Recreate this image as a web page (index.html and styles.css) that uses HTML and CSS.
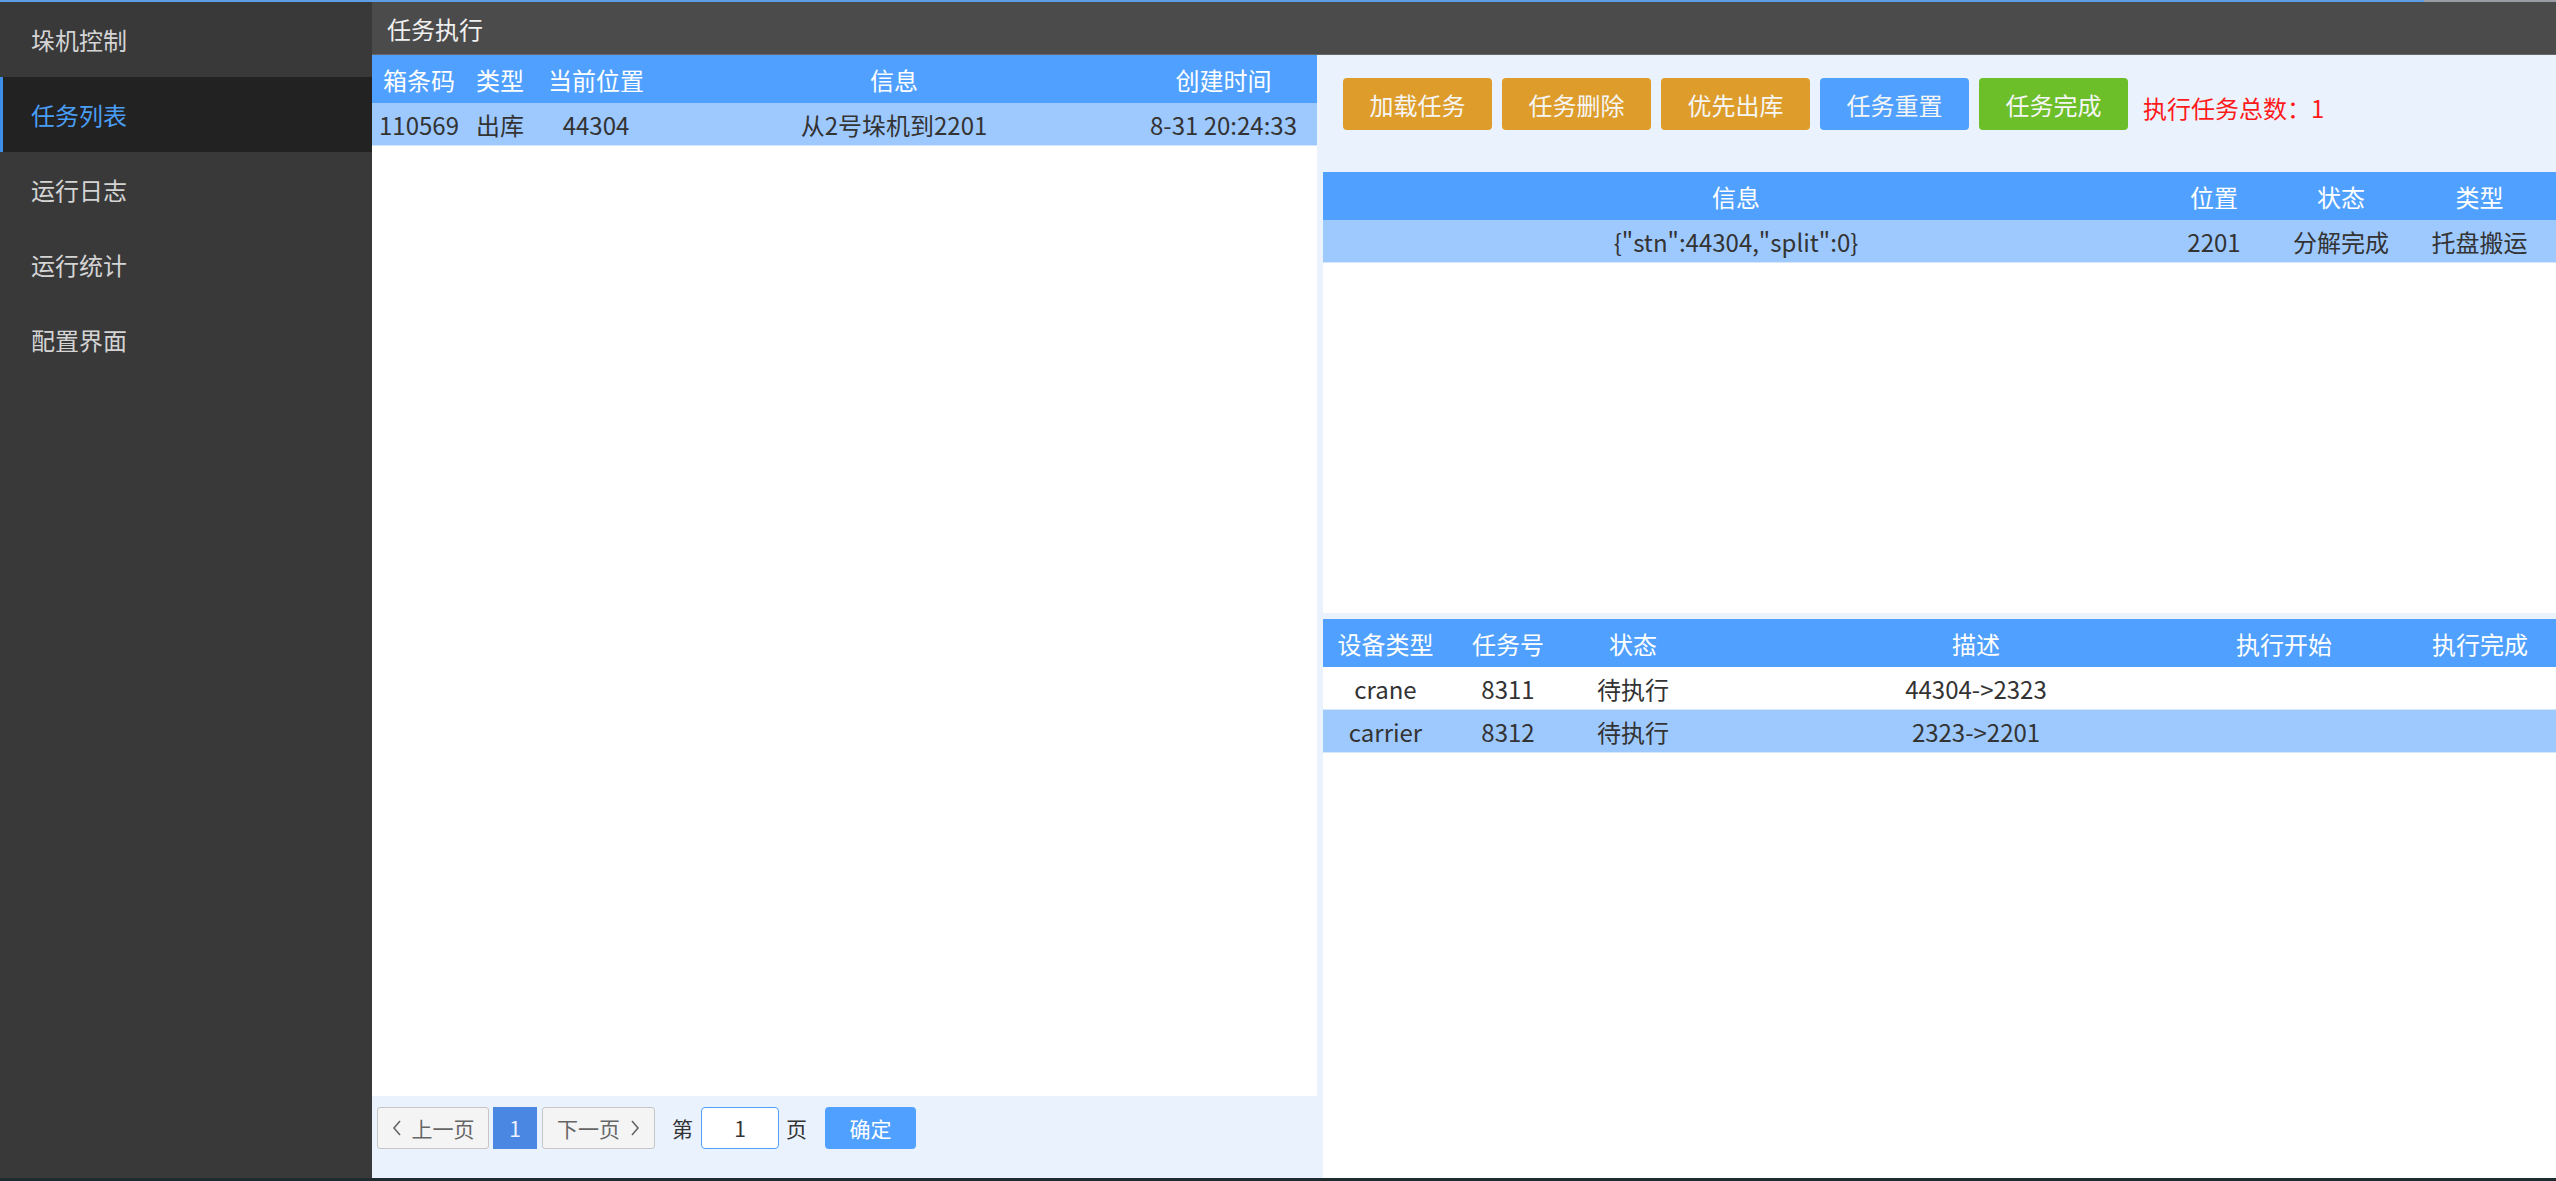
FILE: index.html
```html
<!DOCTYPE html>
<html lang="zh-CN">
<head>
<meta charset="utf-8">
<title>任务执行</title>
<link rel="stylesheet" href="styles.css">
</head>
<body>
<div class="topline"></div>
<div class="app">
  <nav class="sidebar">
    <div class="nav-item">垛机控制</div>
    <div class="nav-item active">任务列表</div>
    <div class="nav-item">运行日志</div>
    <div class="nav-item">运行统计</div>
    <div class="nav-item">配置界面</div>
  </nav>
  <main class="main">
    <div class="titlebar">任务执行</div>
    <div class="content">
      <section class="left">
        <div class="grid left-grid">
          <div class="hrow">
            <div class="cell">箱条码</div>
            <div class="cell">类型</div>
            <div class="cell">当前位置</div>
            <div class="cell">信息</div>
            <div class="cell">创建时间</div>
          </div>
          <div class="drow sel">
            <div class="cell">110569</div>
            <div class="cell">出库</div>
            <div class="cell">44304</div>
            <div class="cell">从2号垛机到2201</div>
            <div class="cell">8-31 20:24:33</div>
          </div>
        </div>
        <div class="left-fill"></div>
        <div class="pager">
          <button class="pbtn prev"><svg class="chev" width="10" height="18" viewBox="0 0 10 18"><polyline points="8,2 2,9 8,16" fill="none" stroke="#666" stroke-width="1.6"/></svg>上一页</button>
          <button class="pnum">1</button>
          <button class="pbtn next">下一页<svg class="chev" width="10" height="18" viewBox="0 0 10 18"><polyline points="2,2 8,9 2,16" fill="none" stroke="#666" stroke-width="1.6"/></svg></button>
          <span class="plabel first">第</span>
          <input class="pinput" type="text" value="1">
          <span class="plabel">页</span>
          <button class="pok">确定</button>
        </div>
      </section>
      <section class="right">
        <div class="toolbar">
          <button class="btn orange">加载任务</button>
          <button class="btn orange">任务删除</button>
          <button class="btn orange">优先出库</button>
          <button class="btn blue">任务重置</button>
          <button class="btn green">任务完成</button>
          <span class="total">执行任务总数：1</span>
        </div>
        <div class="panel panel-top">
          <div class="grid r1-grid">
            <div class="hrow">
              <div class="cell">信息</div>
              <div class="cell">位置</div>
              <div class="cell">状态</div>
              <div class="cell">类型</div>
            </div>
            <div class="drow sel">
              <div class="cell">{"stn":44304,"split":0}</div>
              <div class="cell">2201</div>
              <div class="cell">分解完成</div>
              <div class="cell">托盘搬运</div>
            </div>
          </div>
        </div>
        <div class="panel panel-bottom">
          <div class="grid r2-grid">
            <div class="hrow">
              <div class="cell">设备类型</div>
              <div class="cell">任务号</div>
              <div class="cell">状态</div>
              <div class="cell c4">描述</div>
              <div class="cell">执行开始</div>
              <div class="cell c6">执行完成</div>
            </div>
            <div class="drow">
              <div class="cell">crane</div>
              <div class="cell">8311</div>
              <div class="cell">待执行</div>
              <div class="cell c4">44304-&gt;2323</div>
              <div class="cell"></div>
              <div class="cell c6"></div>
            </div>
            <div class="drow sel">
              <div class="cell">carrier</div>
              <div class="cell">8312</div>
              <div class="cell">待执行</div>
              <div class="cell c4">2323-&gt;2201</div>
              <div class="cell"></div>
              <div class="cell c6"></div>
            </div>
          </div>
        </div>
      </section>
    </div>
  </main>
</div>
</body>
</html>
```

FILE: styles.css
```css
* { box-sizing: border-box; }
html, body { margin: 0; padding: 0; }
body {
  width: 2556px;
  height: 1181px;
  overflow: hidden;
  background: #1e2b2f;
  font-family: "Noto Sans CJK SC", "Microsoft YaHei", "Noto Sans", sans-serif;
  font-size: 24px;
  color: #333;
}
.topline {
  height: 2px;
  background: linear-gradient(to right, #5e9ce6 0, #5e9ce6 2424px, #9a9da3 2424px, #9a9da3 100%);
}
.app {
  display: flex;
  height: 1176px;
}
.sidebar {
  width: 372px;
  flex: none;
  background: #393939;
  display: flex;
  flex-direction: column;
}
.nav-item {
  height: 75px;
  display: flex;
  align-items: center;
  padding-left: 31px;
  color: #d4d4d4;
  font-size: 24px;
}
.nav-item.active {
  background: #222222;
  color: #4a9ef6;
  border-left: 3px solid #3d8ee8;
  padding-left: 28px;
}
.main {
  flex: 1;
  display: flex;
  flex-direction: column;
  min-width: 0;
}
.titlebar {
  height: 53px;
  flex: none;
  background: #4b4b4b;
  border-bottom: 1px solid #686868;
  color: #f0f0f0;
  display: flex;
  align-items: center;
  padding-left: 15px;
  font-size: 24px;
}
.content {
  flex: 1;
  display: flex;
  min-height: 0;
}
.left {
  width: 945px;
  flex: none;
  display: flex;
  flex-direction: column;
  background: #ffffff;
}
.grid { display: flex; flex-direction: column; }
.hrow, .drow { display: grid; }
.left-grid .hrow, .left-grid .drow { grid-template-columns: 94px 68px 124px 472px 187px; }
.r1-grid .hrow, .r1-grid .drow { grid-template-columns: 826px 130px 124px 1fr; }
.r2-grid .hrow, .r2-grid .drow { grid-template-columns: 125px 120px 130px 516px 140px 1fr; }
.hrow {
  height: 48px;
  background: #50a1ff;
  color: #ffffff;
}
.drow {
  height: 43px;
  background: #ffffff;
  border-bottom: 1px solid #d6e6fb;
  color: #333333;
}
.drow.sel { background: #9ec9ff; }
.cell {
  display: flex;
  align-items: center;
  justify-content: center;
  white-space: nowrap;
}
.r2-grid .c4 { padding-left: 40px; }
.r2-grid .c6 { padding-left: 50px; }
.left-fill { flex: 1; }
.pager {
  height: 82px;
  flex: none;
  background: #eaf2fe;
  display: flex;
  align-items: flex-start;
  padding: 11px 0 0 5px;
  font-size: 21px;
}
.pager button, .pager input { font-family: inherit; font-size: 21px; margin: 0; flex: none; }
.pbtn {
  height: 42px;
  width: 112px;
  background: #f4f4f4;
  border: 1px solid #c6c6c6;
  border-radius: 3px;
  color: #666;
  display: flex;
  align-items: center;
  justify-content: center;
  gap: 10px;
  padding: 0;
}
.pnum {
  height: 42px;
  width: 44px;
  margin-left: 4px !important;
  background: #4a87e2;
  border: none;
  color: #eef4ff;
  padding: 0;
}
.pbtn.next { width: 113px; margin-left: 5px !important; }
.plabel {
  height: 42px;
  display: flex;
  align-items: center;
  color: #333;
  margin-left: 7px;
}
.plabel.first { margin-left: 17px; }
.pinput {
  width: 78px;
  height: 42px;
  margin-left: 8px !important;
  border: 1px solid #4fa0ff;
  border-radius: 4px;
  background: #fff;
  text-align: center;
  color: #333;
  outline: none;
  padding: 0;
}
.pok {
  height: 42px;
  width: 91px;
  margin-left: 18px !important;
  background: #50a1ff;
  color: #fff;
  border: none;
  border-radius: 4px;
  padding: 0;
}
.right {
  flex: 1;
  min-width: 0;
  background: #eaf2fe;
  padding-left: 6px;
  display: flex;
  flex-direction: column;
}
.toolbar {
  height: 117px;
  flex: none;
  display: flex;
  align-items: flex-start;
  padding: 23px 0 0 20px;
  gap: 10px;
}
.btn {
  width: 149px;
  height: 52px;
  border: none;
  border-radius: 4px;
  color: #f6f6f6;
  font-family: inherit;
  font-size: 24px;
  padding: 0;
}
.btn.orange { background: #de9d2b; }
.btn.blue { background: #50a1ff; }
.btn.green { background: #6dbf2a; }
.total {
  color: #ff1a1a;
  font-size: 24px;
  height: 52px;
  display: flex;
  align-items: center;
  padding-top: 6px;
  margin-left: 5px;
}
.panel { background: #ffffff; }
.panel-top { height: 441px; flex: none; }
.panel-bottom { flex: 1; margin-top: 6px; }
```
